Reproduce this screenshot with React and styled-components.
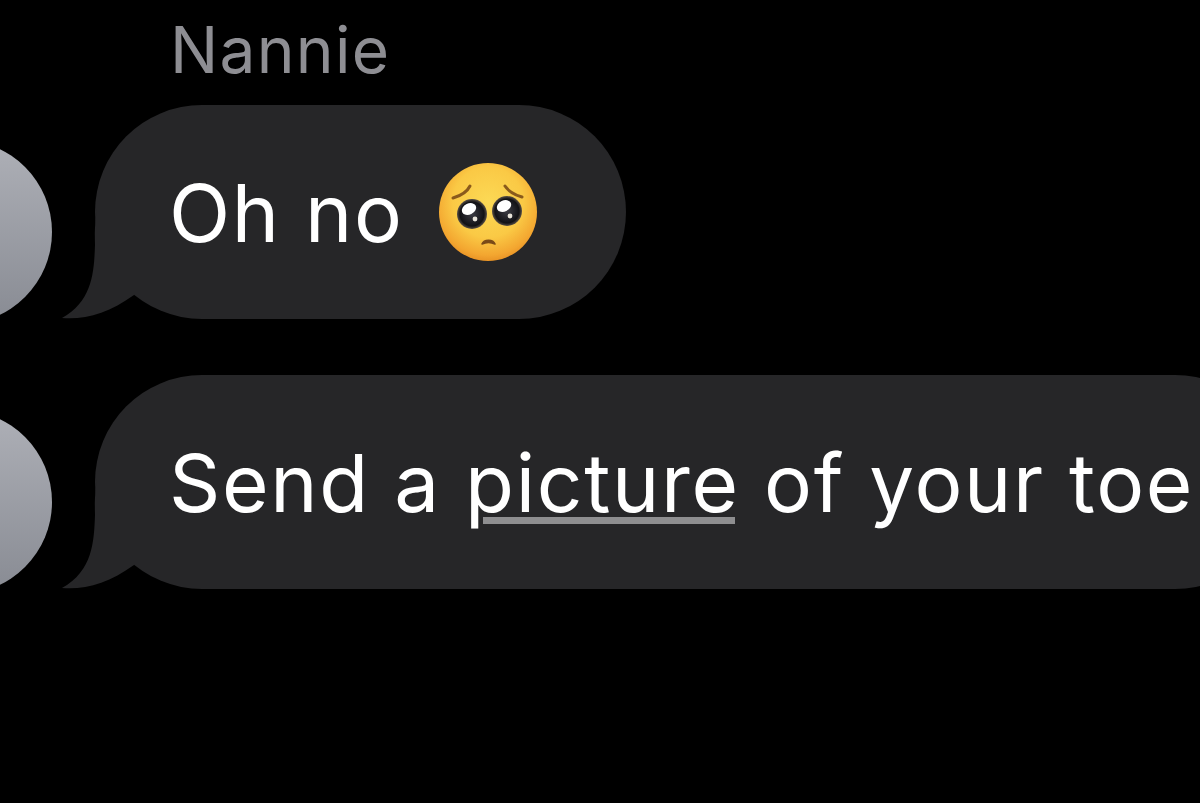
import React from 'react'
import styled, { createGlobalStyle } from 'styled-components'

const GlobalStyle = createGlobalStyle`
  html, body {
    margin: 0;
    height: 100%;
    background: #000;
    overflow: hidden;
  }
`

const Screen = styled.div`
  width: 1200px;
  height: 803px;
  overflow: hidden;
  background: #000;
  font-family: Inter, "Liberation Sans", sans-serif;
  padding-top: 14px;
  box-sizing: border-box;
  filter: blur(0.5px);
`

const SenderName = styled.div`
  margin-left: 170px;
  height: 91px;
  font-size: 64px;
  letter-spacing: 1.3px;
  line-height: 72px;
  color: #8e8e93;
`

const MessageList = styled.div`
  display: flex;
  flex-direction: column;
  gap: 56px;
`

const Row = styled.div`
  display: flex;
  align-items: flex-end;
  gap: 43px;
  margin-left: -132px;
`

const Avatar = styled.div`
  flex: none;
  width: 184px;
  height: 184px;
  margin-bottom: -5px;
  border-radius: 50%;
  background: linear-gradient(180deg, #aeb0b7 0%, #888b93 100%);
`

const Bubble = styled.div`
  position: relative;
  flex: none;
  display: flex;
  align-items: center;
  gap: 34px;
  height: 214px;
  padding: 0 88px 0 74px;
  border-radius: 107px;
  background: #262628;
  color: #fff;
  font-size: 80px;
  letter-spacing: 1.7px;
  white-space: nowrap;
`

const TailShape = styled.svg`
  position: absolute;
  left: -34px;
  bottom: 0;
  width: 74px;
  height: 110px;
`

const Linked = styled.span`
  position: relative;

  &::after {
    content: '';
    position: absolute;
    left: 18px;
    right: 5px;
    bottom: 7px;
    height: 7px;
    background: #8e8e90;
  }
`

const Emoji = styled.svg`
  flex: none;
  width: 100px;
  height: 100px;
  filter: blur(0.6px);
`

function Tail() {
  return (
    <TailShape viewBox="0 0 74 110">
      <path d="M36 0 C33 20 34 30 34 36 C33 62 32 92 1 109 C24 111 48 104 73 86 L73 0 Z" fill="#262628" />
    </TailShape>
  )
}

function PleadingFace() {
  return (
    <Emoji viewBox="0 0 100 100">
      <defs>
        <radialGradient id="skin" cx="50%" cy="40%" r="60%">
          <stop offset="0%" stopColor="#fcd955" />
          <stop offset="60%" stopColor="#fac945" />
          <stop offset="90%" stopColor="#f3a630" />
          <stop offset="100%" stopColor="#e99426" />
        </radialGradient>
        <radialGradient id="eye" cx="50%" cy="50%" r="50%">
          <stop offset="0%" stopColor="#3c3c44" />
          <stop offset="80%" stopColor="#121216" />
          <stop offset="100%" stopColor="#5a5046" />
        </radialGradient>
      </defs>
      <circle cx="50" cy="50" r="49" fill="url(#skin)" />
      <path d="M15 36 C22 34 29 30 32 24" fill="none" stroke="#8a5a1c" strokeWidth="3" strokeLinecap="round" />
      <path d="M67 24 C71 30 77 33 84 35" fill="none" stroke="#8a5a1c" strokeWidth="3" strokeLinecap="round" />
      <circle cx="34" cy="52" r="15" fill="url(#eye)" />
      <circle cx="69" cy="49" r="15" fill="url(#eye)" />
      <ellipse cx="31" cy="47" rx="7.5" ry="5.5" fill="#fff" transform="rotate(-25 31 47)" />
      <ellipse cx="66" cy="44" rx="7.5" ry="5.5" fill="#fff" transform="rotate(-25 66 44)" />
      <circle cx="37" cy="57" r="2.4" fill="#e8e4da" />
      <circle cx="72" cy="54" r="2.4" fill="#e8e4da" />
      <path d="M44 82 C46 77 55 77 57 82 C53 80 48 80 44 82 Z" fill="#7a4a18" stroke="#7a4a18" strokeWidth="1.6" strokeLinejoin="round" />
    </Emoji>
  )
}

export default function App() {
  return (
    <Screen>
      <GlobalStyle />
      <SenderName>Nannie</SenderName>
      <MessageList>
        <Row>
          <Avatar />
          <Bubble>
            <Tail />
            <span>Oh no</span>
            <PleadingFace />
          </Bubble>
        </Row>
        <Row>
          <Avatar />
          <Bubble>
            <Tail />
            <span>Send a <Linked>picture</Linked> of your toe</span>
          </Bubble>
        </Row>
      </MessageList>
    </Screen>
  )
}
